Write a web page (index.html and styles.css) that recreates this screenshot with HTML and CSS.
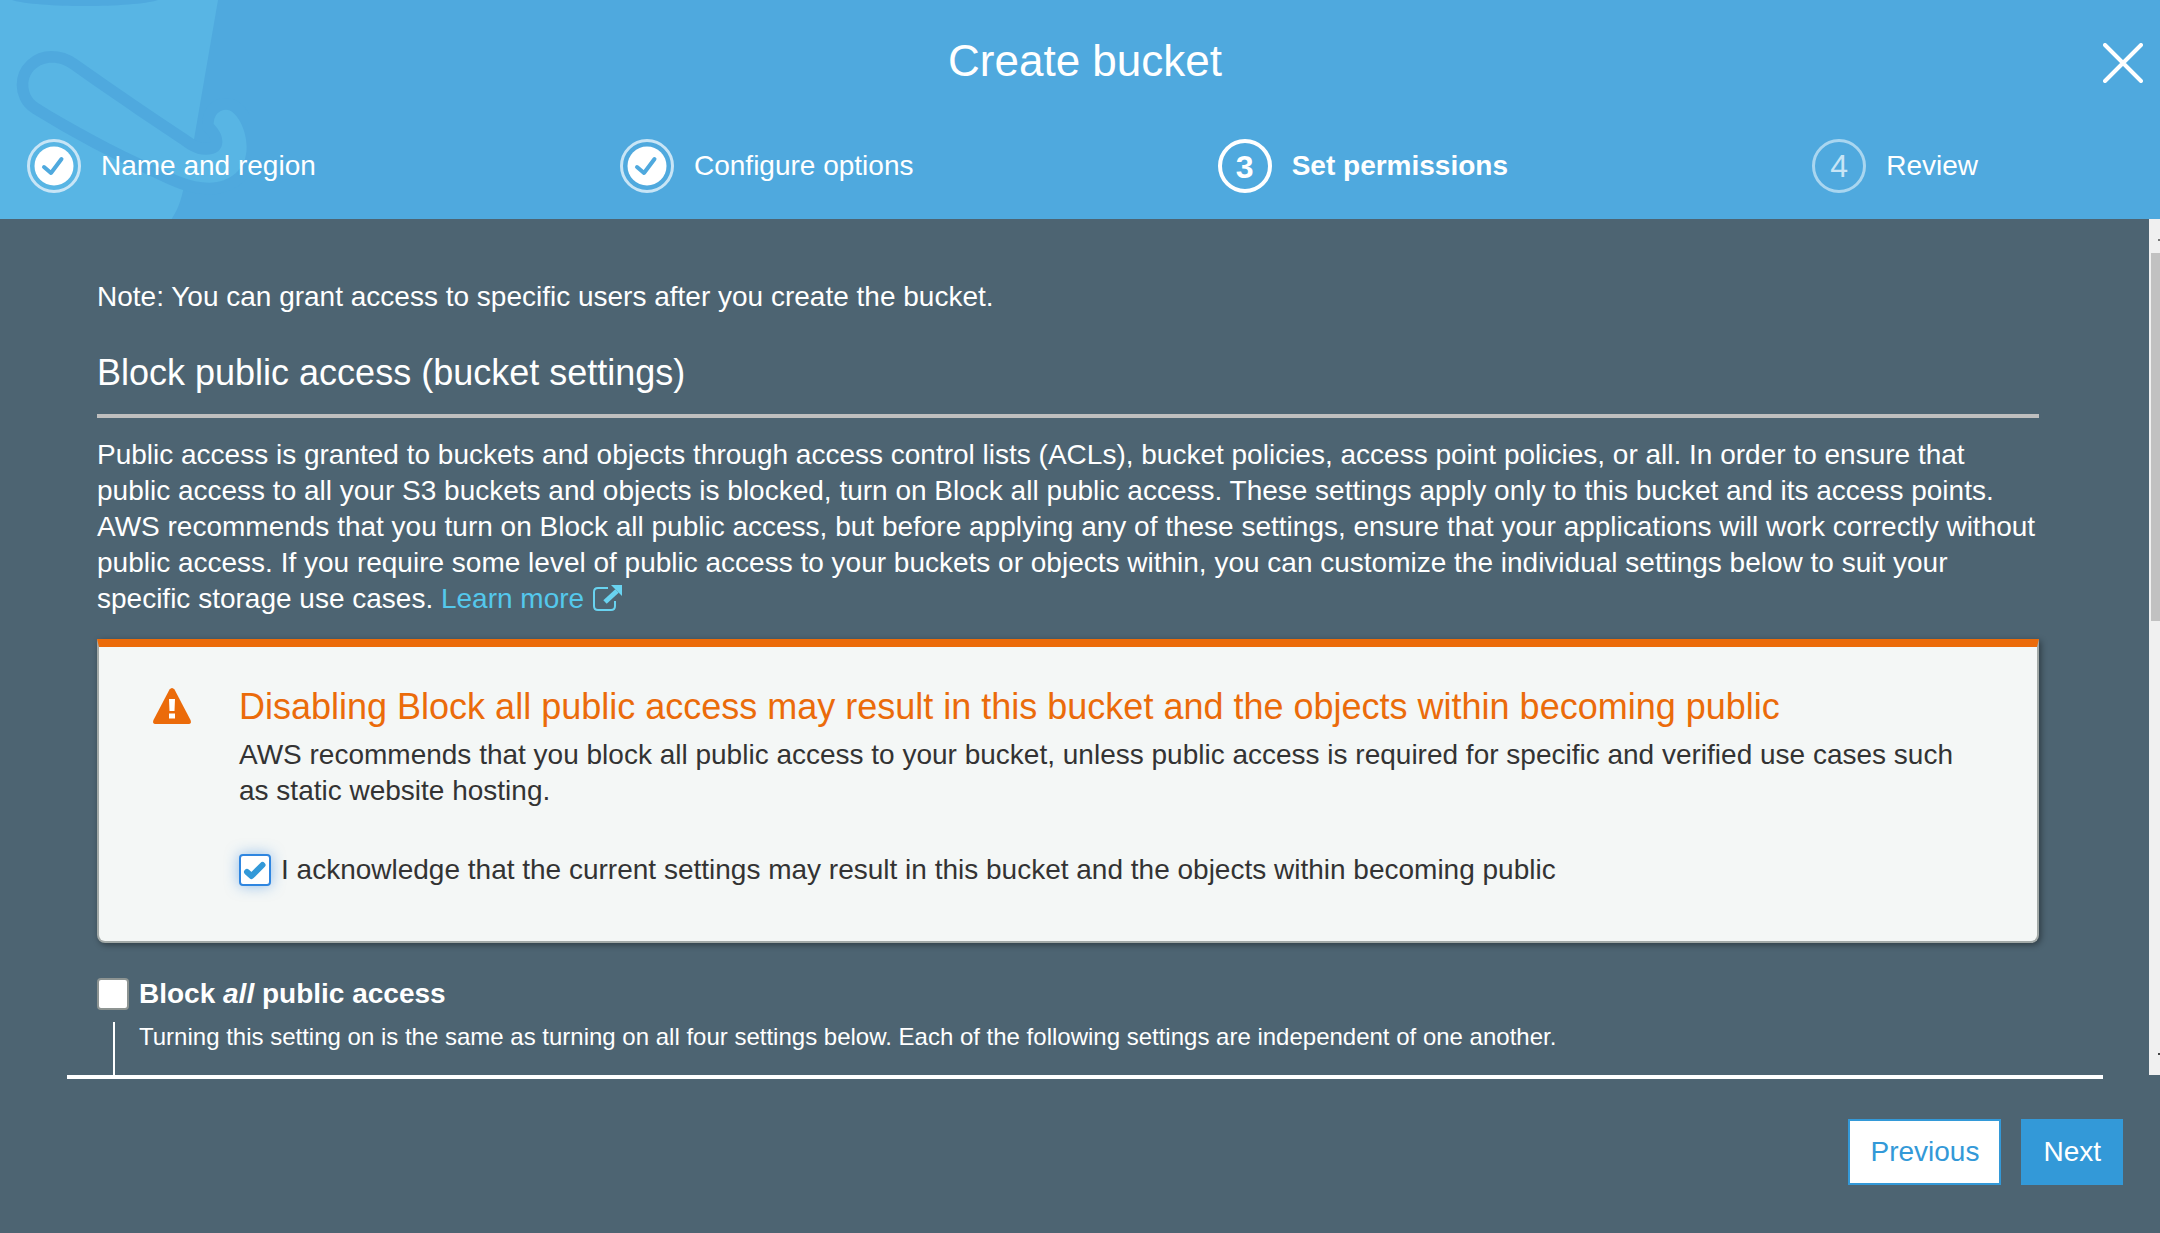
FILE: index.html
```html
<!DOCTYPE html>
<html lang="en">
<head>
<meta charset="utf-8">
<title>Create bucket</title>
<link rel="stylesheet" href="styles.css">
</head>
<body>
<div class="wizard">
  <header class="header">
    <svg class="bucket-art" viewBox="0 0 750 657" aria-hidden="true">
      <path class="art-light" d="M0 0H654L582 418L556 535C548 590 536 625 515 657H0Z"/>
      <path class="art-dark" d="M36 0C110 24 400 24 474 0Z"/>
      <path class="art-handle" d="M155 188C180 188 196 196 212 207C320 283 420 352 535 428C560 444 580 464 618 464C650 464 667 448 667 425C667 405 656 388 641 372C641 345 658 329 678 329C708 329 740 385 740 442C740 508 690 548 628 548C570 548 520 522 470 498C340 441 220 375 115 310C92 295 85 272 85 255C85 216 117 188 155 188Z"/>
    </svg>
    <h1 class="title">Create bucket</h1>
    <button class="close" type="button" aria-label="Close">
      <svg viewBox="0 0 40 40" width="40" height="40" aria-hidden="true"><path d="M2 2L38 38M38 2L2 38"/></svg>
    </button>
    <ol class="steps">
      <li class="step">
        <svg class="done" viewBox="0 0 54 54" aria-hidden="true"><circle class="ring" cx="27" cy="27" r="25.500"/><circle class="disc" cx="27" cy="27" r="19.500"/><path d="M17 28L24 34L34.500 20"/></svg>
        <span>Name and region</span>
      </li>
      <li class="step">
        <svg class="done" viewBox="0 0 54 54" aria-hidden="true"><circle class="ring" cx="27" cy="27" r="25.500"/><circle class="disc" cx="27" cy="27" r="19.500"/><path d="M17 28L24 34L34.500 20"/></svg>
        <span>Configure options</span>
      </li>
      <li class="step current" aria-current="step">
        <span class="number">3</span>
        <span>Set permissions</span>
      </li>
      <li class="step upcoming">
        <span class="number">4</span>
        <span>Review</span>
      </li>
    </ol>
  </header>

  <div class="body">
    <main class="content">
      <p class="note">Note: You can grant access to specific users after you create the bucket.</p>
      <h2 class="section-title">Block public access (bucket settings)</h2>
      <p class="intro">Public access is granted to buckets and objects through access control lists (ACLs), bucket policies, access point policies, or all. In order to ensure that public access to all your S3 buckets and objects is blocked, turn on Block all public access. These settings apply only to this bucket and its access points. AWS recommends that you turn on Block all public access, but before applying any of these settings, ensure that your applications will work correctly without public access. If you require some level of public access to your buckets or objects within, you can customize the individual settings below to suit your specific storage use cases. <a class="link" href="#learn">Learn more <svg class="external" viewBox="0 0 30 30" aria-hidden="true"><path class="frame" d="M16 4H6Q2 4 2 8V22Q2 26 6 26H19Q23 26 23 22V17"/><path class="shaft" d="M13 18L25 7"/><path class="tip" d="M19 1H30V12Z"/></svg></a></p>

      <section class="alert">
        <svg class="warning" viewBox="0 0 38 36" aria-hidden="true"><path class="triangle" d="M16.500 1.500Q19 -1.500 21.500 1.500L37.500 32Q39 36 35 36H3Q-1 36 .5 32Z"/><path class="mark" d="M16 11H22L21.500 23H16.500ZM16 25.500H22V30.500H16Z"/></svg>
        <div class="alert-text">
          <h3 class="alert-title">Disabling Block all public access may result in this bucket and the objects within becoming public</h3>
          <p>AWS recommends that you block all public access to your bucket, unless public access is required for specific and verified use cases such as static website hosting.</p>
          <label class="check acknowledge">
            <span class="box"><input type="checkbox" checked><svg viewBox="0 0 32 32" aria-hidden="true"><path d="M8 18L12.500 22L23.500 11"/></svg></span>
            <span>I acknowledge that the current settings may result in this bucket and the objects within becoming public</span>
          </label>
        </div>
      </section>

      <section class="setting">
        <label class="check block-all">
          <span class="box"><input type="checkbox"></span>
          <span>Block <em>all</em> public access</span>
        </label>
        <p class="help">Turning this setting on is the same as turning on all four settings below. Each of the following settings are independent of one another.</p>
      </section>
    </main>
    <div class="scrollbar" aria-hidden="true">
      <span class="arrow up"></span>
      <span class="thumb"></span>
      <span class="arrow down"></span>
    </div>
  </div>

  <footer class="footer">
    <button class="button secondary" type="button">Previous</button>
    <button class="button primary" type="button">Next</button>
  </footer>
</div>
</body>
</html>
```
FILE: styles.css
```css
* { box-sizing: border-box; }

body {
  margin: 0;
  background: #4d6472;
  color: #fff;
  font: 28px/36px "Liberation Sans", Arial, sans-serif;
}

h1, h2, h3, p, ol { margin: 0; padding: 0; font-weight: 400; }

.wizard {
  display: flex;
  flex-direction: column;
  height: 100vh;
}

/* Header and step list */
.header {
  position: relative;
  flex: none;
  padding: 36px 0 26px;
  background: #4fa9de;
  overflow: hidden;
}
.bucket-art {
  position: absolute;
  top: 0;
  left: 0;
  width: 250px;
  height: 219px;
}
.art-light { fill: #58b5e4; }
.art-dark { fill: #4fa9de; }
.art-handle {
  fill: #58b5e4;
  stroke: #4fa9de;
  stroke-width: 70;
  paint-order: stroke;
}
.title {
  position: relative;
  padding-left: 10px;
  font-size: 44px;
  line-height: 50px;
  text-align: center;
}
.close {
  position: absolute;
  top: 43px;
  right: 17px;
  width: 40px;
  height: 40px;
  padding: 0;
  border: 0;
  background: none;
}
.close svg { display: block; }
.close path { stroke: #fff; stroke-width: 4; stroke-linecap: round; }
.steps {
  position: relative;
  display: flex;
  justify-content: space-between;
  margin-top: 53px;
  padding: 0 182px 0 27px;
  list-style: none;
}
.step {
  display: flex;
  align-items: center;
  gap: 20px;
}
.step svg, .number { width: 54px; height: 54px; }
.done .ring { fill: none; stroke: #c8e5f6; stroke-width: 3; }
.done .disc { fill: #fff; }
.done path {
  fill: none;
  stroke: #4fa9de;
  stroke-width: 4;
  stroke-linecap: round;
  stroke-linejoin: round;
}
.number {
  border: 4px solid #fff;
  border-radius: 50%;
  font-size: 32px;
  line-height: 48px;
  text-align: center;
}
.current { font-weight: 700; }
.upcoming .number { border: 3px solid #a9d6f0; color: #c8e5f6; }

/* Scrolling area */
.body {
  display: flex;
  flex: 1;
  min-height: 0;
}
.content {
  flex: 1;
  padding: 60px 110px 0 97px;
  overflow: hidden;
}
.section-title {
  margin-top: 36px;
  padding-bottom: 19px;
  border-bottom: 4px solid #bfbfbf;
  font-size: 36px;
  line-height: 44px;
}
.intro { margin-top: 19px; }
.link { color: #54c8ec; text-decoration: none; }
.external {
  width: 30px;
  height: 30px;
  vertical-align: -6px;
}
.external path { fill: none; stroke: #69d3f0; stroke-width: 2; }
.external .shaft { stroke-width: 5; }
.external .tip { fill: #69d3f0; stroke: none; }

.alert {
  display: flex;
  gap: 48px;
  margin-top: 22px;
  padding: 36px 80px 53px 54px;
  border: 2px solid #a2a9a7;
  border-top: 8px solid #eb6b0a;
  border-radius: 0 0 8px 8px;
  background: #f4f7f6;
  box-shadow: 2px 2px 6px rgba(0, 0, 0, 0.4);
  color: #333;
}
.warning { flex: none; width: 38px; height: 36px; margin-top: 5px; }
.triangle { fill: #eb6b0a; }
.mark { fill: #fff; }
.alert-title {
  margin-bottom: 6px;
  color: #eb6b0a;
  font-size: 36px;
  line-height: 48px;
}

.check { display: flex; align-items: center; gap: 10px; }
.acknowledge { margin-top: 43px; }
.box { position: relative; width: 32px; height: 32px; }
.box input {
  display: block;
  width: 32px;
  height: 32px;
  margin: 0;
  border: 2px solid #8d9492;
  border-radius: 4px;
  background: #fff;
  appearance: none;
}
.box input:checked {
  border-color: #2f86e0;
  box-shadow: 0 0 14px rgba(47, 134, 224, 0.5);
}
.box svg { position: absolute; inset: 0; }
.box path {
  fill: none;
  stroke: #3399d8;
  stroke-width: 6;
  stroke-linecap: round;
  stroke-linejoin: round;
}

.setting { margin-top: 33px; }
.block-all { font-weight: 700; }
.help {
  margin: 10px 0 0 16px;
  padding: 0 0 60px 24px;
  border-left: 2px solid #fff;
  font-size: 24px;
  line-height: 30px;
}

.scrollbar {
  display: flex;
  flex: none;
  flex-direction: column;
  width: 11px;
  padding-left: 2px;
  background: #f0f0f0;
  overflow: hidden;
}
.arrow {
  flex: none;
  width: 14px;
  height: 34px;
  margin-left: 7px;
}
.up { background: linear-gradient(#777, #777) 0 20px / 14px 2px no-repeat; }
.down { margin-top: auto; background: linear-gradient(#444, #444) 0 12px / 14px 2px no-repeat; }
.thumb { height: 43%; background: #c1c1c1; }

/* Footer actions */
.footer {
  display: flex;
  flex: none;
  justify-content: flex-end;
  gap: 20px;
  margin: 0 57px 0 67px;
  padding: 40px 0 48px;
  border-top: 4px solid #fff;
}
.button {
  height: 66px;
  padding: 0 20px;
  border: 2px solid #3399d8;
  font: inherit;
}
.secondary { background: #fff; color: #3399d8; }
.primary { margin-right: -20px; background: #3399d8; color: #fff; }
```
